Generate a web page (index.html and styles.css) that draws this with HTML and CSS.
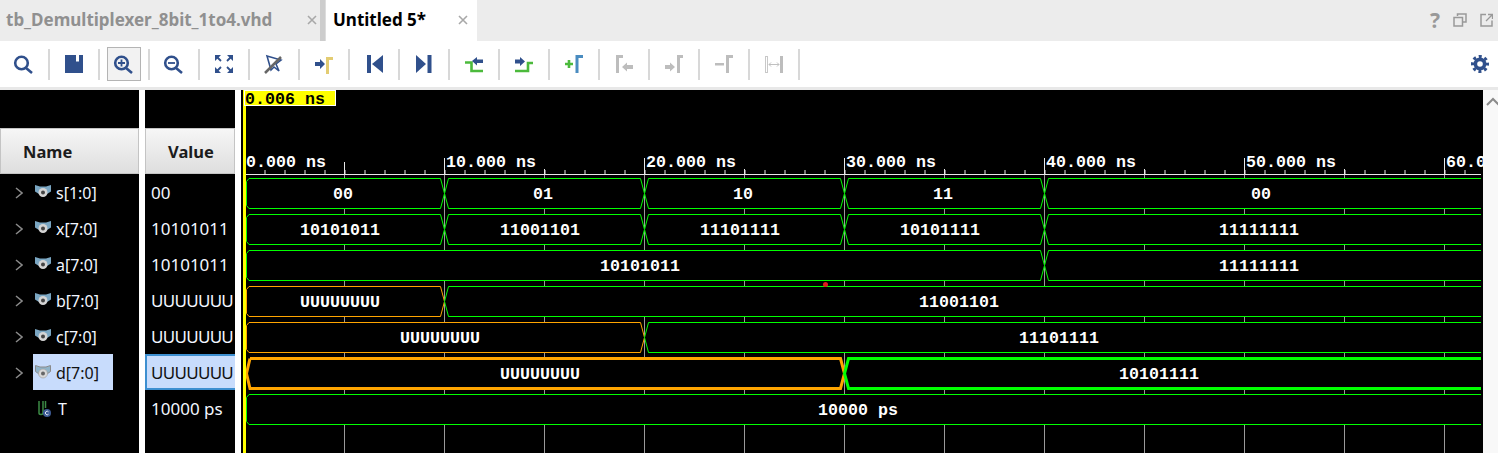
FILE: index.html
```html
<!DOCTYPE html>
<html>
<head lang="en">
    <meta charset="UTF-8">
    <title>Untitled 5</title>
    <link rel="stylesheet" href="styles.css">
</head>
<body>
<svg class="defs" width="0" height="0">
    <symbol id="bus" viewBox="0 0 16 16">
        <path d="M0 1L5 2.500H11L16 1V7.500L12 10H4L0 7.500Z" fill="#7aa6c2"/>
        <circle cx="8" cy="8.500" r="4.500" fill="#d4d4d4"/>
        <circle cx="8" cy="8.500" r="2" fill="#444"/>
    </symbol>
    <symbol id="bus-sel" viewBox="0 0 16 16">
        <path d="M.5 1.500L5 3H11L15.500 1.500V7.500L12 10H4L.5 7.500Z" fill="#8fb3c8" stroke="#8a8a8a"/>
        <circle cx="8" cy="9.500" r="4.500" fill="#d8d8d8" stroke="#999" stroke-width=".6"/>
        <circle cx="8" cy="9.500" r="2" fill="#666"/>
    </symbol>
    <symbol id="chev" viewBox="0 0 8 12">
        <path d="M1 1L7 6L1 11" fill="none" stroke="#8a8a8a" stroke-width="1.500"/>
    </symbol>
    <symbol id="close" viewBox="0 0 10 10">
        <path d="M1 1L9 9M9 1L1 9" stroke="#a8a8a8" stroke-width="1.600"/>
    </symbol>
</svg>

<div class="tabbar">
    <div class="tab tab-off">
        <span class="tab-title">tb_Demultiplexer_8bit_1to4.vhd</span>
        <svg class="tab-x" width="10" height="10"><use href="#close"/></svg>
    </div>
    <div class="tab-sep"></div>
    <div class="tab tab-on">
        <span class="tab-title">Untitled 5*</span>
        <svg class="tab-x" width="10" height="10"><use href="#close"/></svg>
    </div>
    <div class="win-btns">
        <span class="help">?</span>
        <svg width="14" height="14" viewBox="0 0 14 14" fill="none" stroke="#999" stroke-width="1.500"><path d="M4.500 3V1H13V9H9.500"/><rect x="1" y="4.500" width="8.500" height="8.500"/></svg>
        <svg width="13" height="14" viewBox="0 0 13 14" fill="none" stroke="#999" stroke-width="1.500"><path d="M6 1.500H1V13H12V7.500"/><path d="M6 8L12 2M8 1.500H12.500V6" stroke-width="1.300"/></svg>
    </div>
</div>

<div class="toolbar">
    <div class="tool"><div class="btn"><svg class="ico" viewBox="0 0 24 24"><circle cx="9.500" cy="11" r="6.300" class="ln"/><path d="M14 16L20 21" class="ln"/></svg></div></div>
    <div class="tool"><div class="btn"><svg class="ico" viewBox="0 0 24 24"><path d="M3 3H21V21H3Z" class="bl"/><rect x="14" y="3" width="3" height="6.500" fill="#fff"/></svg></div></div>
    <div class="tool"><div class="btn btn-on"><svg class="ico" viewBox="0 0 24 24"><circle cx="9.500" cy="11" r="6.300" class="ln"/><path d="M14 16L20 21" class="ln"/><path d="M9.500 7.500V14.500M6 11H13" class="ln thin"/></svg></div></div>
    <div class="tool"><div class="btn"><svg class="ico" viewBox="0 0 24 24"><circle cx="9.500" cy="11" r="6.300" class="ln"/><path d="M14 16L20 21" class="ln"/><path d="M6 11H13" class="ln thin"/></svg></div></div>
    <div class="tool"><div class="btn"><svg class="ico" viewBox="0 0 24 24"><path d="M4 4L9 9M20 4L15 9M4 20L9 15M20 20L15 15" class="ln thin"/><path d="M3 3H9L3 9ZM21 3H15L21 9ZM3 21H9L3 15ZM21 21H15L21 15Z" class="bl"/></svg></div></div>
    <div class="tool"><div class="btn"><svg class="ico" viewBox="0 0 24 24"><path d="M5 4L19 8L14 12L17 19L12 15L9 18Z" fill="none" stroke="#30508c" stroke-width="1.600"/><path d="M3 21L19 5" stroke="#666" stroke-width="2.500"/></svg></div></div>
    <div class="tool"><div class="btn"><svg class="ico" viewBox="0 0 24 24"><path d="M3 10H8V7L13 12L8 17V14H3Z" class="bl"/><path d="M15.500 22V6.500H21" class="gd"/></svg></div></div>
    <div class="tool"><div class="btn"><svg class="ico" viewBox="0 0 24 24"><rect x="5" y="3" width="4" height="18" class="bl"/><path d="M21 3V21L10 12Z" class="bl"/></svg></div></div>
    <div class="tool"><div class="btn"><svg class="ico" viewBox="0 0 24 24"><rect x="15.500" y="3" width="4" height="18" class="bl"/><path d="M4 3V21L14 12Z" class="bl"/></svg></div></div>
    <div class="tool"><div class="btn"><svg class="ico" viewBox="0 0 24 24"><path d="M3 10.500H9.500V19H21" class="gr"/><path d="M10 9L15 5V7.500H21V11H15V13.500Z" class="bl"/></svg></div></div>
    <div class="tool"><div class="btn"><svg class="ico" viewBox="0 0 24 24"><path d="M3 19H16V11H21" class="gr"/><path d="M3 7.500H8V5L13 9.500L8 14V11.500H3Z" class="bl"/></svg></div></div>
    <div class="tool"><div class="btn"><svg class="ico" viewBox="0 0 24 24"><path d="M3 12H11M7 8V16" class="gr"/><path d="M15 21V4.500H21" fill="none" stroke="#4a8cc0" stroke-width="3"/></svg></div></div>
    <div class="tool"><div class="btn"><svg class="ico" viewBox="0 0 24 24"><path d="M5.500 21V4.500H11" class="dis"/><path d="M10 15L15 10.500V13H21V17H15V19.500Z" fill="#bdbdbd"/></svg></div></div>
    <div class="tool"><div class="btn"><svg class="ico" viewBox="0 0 24 24"><path d="M16.500 21V4.500H21" class="dis"/><path d="M3 13H8V10.500L13 15L8 19.500V17H3Z" fill="#bdbdbd"/></svg></div></div>
    <div class="tool"><div class="btn"><svg class="ico" viewBox="0 0 24 24"><path d="M15.500 21V4.500H21" class="dis"/><rect x="3" y="11" width="9" height="2.500" fill="#bdbdbd"/></svg></div></div>
    <div class="tool"><div class="btn"><svg class="ico" viewBox="0 0 24 24"><rect x="3.500" y="4.500" width="2" height="16" fill="none" stroke="#c8c8c8"/><rect x="18" y="4" width="3" height="17" fill="#bdbdbd"/><path d="M7 12.500H17M9 10.500L7 12.500L9 14.500M15 10.500L17 12.500L15 14.500" fill="none" stroke="#c0c0c0"/></svg></div></div>
    <svg class="gear" width="20" height="20" viewBox="0 0 20 20"><circle cx="10" cy="10" r="6.500" fill="#30508c"/><circle cx="10" cy="10" r="7.500" fill="none" stroke="#30508c" stroke-width="3" stroke-dasharray="3 2.890" stroke-dashoffset="1.500"/><circle cx="10" cy="10" r="2.800" fill="#fff"/></svg>
</div>
<div class="toolbar-edge"></div>

<div class="main">
    <div class="col names">
        <div class="head">Name</div>
        <div class="row"><svg class="chev" width="8" height="12"><use href="#chev"/></svg><div class="sig"><svg class="bus" width="16" height="16"><use href="#bus"/></svg>s[1:0]</div></div>
        <div class="row"><svg class="chev" width="8" height="12"><use href="#chev"/></svg><div class="sig"><svg class="bus" width="16" height="16"><use href="#bus"/></svg>x[7:0]</div></div>
        <div class="row"><svg class="chev" width="8" height="12"><use href="#chev"/></svg><div class="sig"><svg class="bus" width="16" height="16"><use href="#bus"/></svg>a[7:0]</div></div>
        <div class="row"><svg class="chev" width="8" height="12"><use href="#chev"/></svg><div class="sig"><svg class="bus" width="16" height="16"><use href="#bus"/></svg>b[7:0]</div></div>
        <div class="row"><svg class="chev" width="8" height="12"><use href="#chev"/></svg><div class="sig"><svg class="bus" width="16" height="16"><use href="#bus"/></svg>c[7:0]</div></div>
        <div class="row"><svg class="chev" width="8" height="12"><use href="#chev"/></svg><div class="sig sig-on"><svg class="bus" width="16" height="16"><use href="#bus-sel"/></svg>d[7:0]</div></div>
        <div class="row row-leaf"><div class="sig"><svg class="bus" width="16" height="18" viewBox="0 0 16 18"><path d="M2 1V13C2 15 6 15 6 13V1M8.500 1V8" fill="none" stroke="#3c8a46" stroke-width="1.500"/><circle cx="10" cy="13" r="4" fill="#3d5a94"/><path d="M11.500 11.800A1.800 1.800 0 1 0 11.500 14.200" fill="none" stroke="#dfe6f2"/></svg>T</div></div>
    </div>
    <div class="col values">
        <div class="head">Value</div>
        <div class="val">00</div>
        <div class="val">10101011</div>
        <div class="val">10101011</div>
        <div class="val val-u">UUUUUUU</div>
        <div class="val val-u">UUUUUUU</div>
        <div class="val val-u val-on">UUUUUUU</div>
        <div class="val">10000 ps</div>
    </div>
    <div class="wave-pane">
        <svg class="wave" width="1242" height="363" viewBox="241 90 1242 363">
            <!-- grid -->
            <g class="grid">
                <path d="M344.500 174V453M444.500 174V453M544.500 174V453M644.500 174V453M744.500 174V453M844.500 174V453M944.500 174V453M1044.500 174V453M1144.500 174V453M1244.500 174V453M1344.500 174V453M1444.500 174V453"/>
            </g>
            <!-- ruler -->
            <g class="ruler">
                <path d="M246 174.500H1481"/>
                <path d="M244 172H1481" stroke-width="4" stroke-dasharray="1 19" transform="translate(.5 0)"/>
                <path d="M344.500 162V174M444.500 158V174M644.500 158V174M844.500 158V174M1044.500 158V174M1244.500 158V174M1444.500 158V174M544.500 169V174M744.500 169V174M944.500 169V174M1144.500 169V174M1344.500 169V174"/>
            </g>
            <text class="t" x="246" y="167">0.000 ns</text>
            <text class="t" x="446" y="167">10.000 ns</text>
            <text class="t" x="646" y="167">20.000 ns</text>
            <text class="t" x="846" y="167">30.000 ns</text>
            <text class="t" x="1046" y="167">40.000 ns</text>
            <text class="t" x="1246" y="167">50.000 ns</text>
            <text class="t" x="1446" y="167">60.000 ns</text>

            <!-- s -->
            <g class="sg" transform="translate(0 178.500)">
                <polyline points="249,0 440.500,0 444.500,15 440.500,30 249,30 246.500,27 246.500,3 249,0"/>
                <polyline points="448.500,0 640.500,0 644.500,15 640.500,30 448.500,30 444.500,15 448.500,0"/>
                <polyline points="648.500,0 840.500,0 844.500,15 840.500,30 648.500,30 644.500,15 648.500,0"/>
                <polyline points="848.500,0 1040.500,0 1044.500,15 1040.500,30 848.500,30 844.500,15 848.500,0"/>
                <polyline points="1481,0 1048.500,0 1044.500,15 1048.500,30 1481,30"/>
                <text x="343" y="20.500">00</text><text x="543" y="20.500">01</text><text x="743" y="20.500">10</text><text x="943" y="20.500">11</text><text x="1261" y="20.500">00</text>
            </g>
            <!-- x -->
            <g class="sg" transform="translate(0 214.500)">
                <polyline points="249,0 440.500,0 444.500,15 440.500,30 249,30 246.500,27 246.500,3 249,0"/>
                <polyline points="448.500,0 640.500,0 644.500,15 640.500,30 448.500,30 444.500,15 448.500,0"/>
                <polyline points="648.500,0 840.500,0 844.500,15 840.500,30 648.500,30 644.500,15 648.500,0"/>
                <polyline points="848.500,0 1040.500,0 1044.500,15 1040.500,30 848.500,30 844.500,15 848.500,0"/>
                <polyline points="1481,0 1048.500,0 1044.500,15 1048.500,30 1481,30"/>
                <text x="340" y="20.500">10101011</text><text x="540" y="20.500">11001101</text><text x="740" y="20.500">11101111</text><text x="940" y="20.500">10101111</text><text x="1259" y="20.500">11111111</text>
            </g>
            <!-- a -->
            <g class="sg" transform="translate(0 250.500)">
                <polyline points="249,0 1040.500,0 1044.500,15 1040.500,30 249,30 246.500,27 246.500,3 249,0"/>
                <polyline points="1481,0 1048.500,0 1044.500,15 1048.500,30 1481,30"/>
                <text x="640" y="20.500">10101011</text><text x="1259" y="20.500">11111111</text>
            </g>
            <!-- b -->
            <g class="sg" transform="translate(0 286.500)">
                <polyline class="und" points="249,0 440.500,0 444.500,15 440.500,30 249,30 246.500,27 246.500,3 249,0"/>
                <polyline points="1481,0 448.500,0 444.500,15 448.500,30 1481,30"/>
                <text x="340" y="20.500">UUUUUUUU</text><text x="959" y="20.500">11001101</text>
            </g>
            <!-- c -->
            <g class="sg" transform="translate(0 322.500)">
                <polyline class="und" points="249,0 640.500,0 644.500,15 640.500,30 249,30 246.500,27 246.500,3 249,0"/>
                <polyline points="1481,0 648.500,0 644.500,15 648.500,30 1481,30"/>
                <text x="440" y="20.500">UUUUUUUU</text><text x="1059" y="20.500">11101111</text>
            </g>
            <!-- d -->
            <g class="sg sg-sel" transform="translate(0 358.500)">
                <polyline class="und" points="250,0 840.500,0 844.500,15 840.500,30 250,30 246.500,15 250,0"/>
                <polyline points="1481,0 848.500,0 844.500,15 848.500,30 1481,30"/>
                <text x="540" y="20.500">UUUUUUUU</text><text x="1159" y="20.500">10101111</text>
            </g>
            <!-- T -->
            <g class="sg" transform="translate(0 394.500)">
                <polyline points="1481,0 249,0 246.500,3 246.500,27 249,30 1481,30"/>
                <text x="858" y="20.500">10000 ps</text>
            </g>
            <circle cx="825.500" cy="284.500" r="2.500" fill="#e01a1a"/>

            <!-- cursor -->
            <rect x="243" y="90" width="3" height="363" fill="#ffff00"/>
            <rect x="244.500" y="90.500" width="91" height="15" fill="#ffff00" stroke="#fff"/>
            <text class="t t-cur" x="245" y="104">0.006 ns</text>
        </svg>
    </div>
    <div class="scroll">
        <svg width="15" height="10" viewBox="0 0 15 10"><path d="M4 8L10 2L16 8" fill="none" stroke="#8a8a8a" stroke-width="2"/></svg>
    </div>
</div>
</body>
</html>
```

FILE: styles.css
```css
*{
    margin:0;
    padding:0;
    box-sizing:border-box;
}
html,body{
    height:453px;
    overflow:hidden;
}
body{
    background:#fff;
    font-family:"Noto Sans",sans-serif;
    display:flex;
    flex-direction:column;
}
.defs{
    display:block;
    height:0;
}

/* tabs */
.tabbar{
    height:41px;
    background:#ececec;
    display:flex;
    flex:none;
}
.tab{
    display:flex;
    align-items:center;
    font-size:17px;
    font-weight:bold;
    padding-bottom:2px;
}
.tab-off{
    width:320px;
    padding-left:6px;
    color:#909090;
}
.tab-sep{
    width:6px;
    background:#cdcdcd;
    border-right:1px solid #ddd;
}
.tab-on{
    width:151px;
    padding-left:7px;
    background:#fff;
    color:#000;
}
.tab-x{
    margin-left:auto;
    margin-right:3px;
}
.tab-on .tab-x{
    margin-right:9px;
}
.win-btns{
    margin-left:auto;
    display:flex;
    align-items:center;
    gap:13px;
    padding-right:5px;
    padding-bottom:2px;
}
.help{
    font-size:21px;
    font-weight:bold;
    color:#999;
}

/* toolbar */
.toolbar{
    height:46px;
    flex:none;
    display:flex;
    align-items:center;
}
.tool{
    width:50px;
    height:46px;
    display:flex;
    align-items:center;
    justify-content:center;
    padding-right:2px;
    background:linear-gradient(#d8d8d8,#d8d8d8) right center/2px 31px no-repeat;
}
.btn{
    width:34px;
    height:34px;
    border:1px solid transparent;
    display:flex;
    align-items:center;
    justify-content:center;
}
.btn-on{
    border-color:#b4b4b4;
    background:#f2f2f2;
}
.ico{
    width:24px;
    height:24px;
}
.ln{
    fill:none;
    stroke:#30508c;
    stroke-width:2.6;
}
.thin{
    stroke-width:1.8;
}
.bl{
    fill:#30508c;
}
.gd{
    fill:none;
    stroke:#e3cc72;
    stroke-width:3;
}
.gr{
    fill:none;
    stroke:#4cba3c;
    stroke-width:2.6;
}
.dis{
    fill:none;
    stroke:#bdbdbd;
    stroke-width:3;
}
.gear{
    margin-left:auto;
    margin-right:8px;
}
.toolbar-edge{
    height:3px;
    flex:none;
    background:#e8e8e8;
}

/* main panes */
.main{
    flex:1;
    display:flex;
    min-height:0;
}
.col{
    background:#000;
    padding-top:38px;
    color:#f2f6ff;
    flex:none;
}
.names{
    width:139px;
    font-size:16px;
}
.values{
    width:90px;
    margin-left:6px;
    overflow:hidden;
    font-size:17px;
}
.head{
    height:46px;
    line-height:46px;
    padding-left:22px;
    font-size:16.5px;
    font-weight:bold;
    color:#1c1c1c;
    background:linear-gradient(#f6f6f6,#dedede);
    border:1px solid #c4c4c4;
}
.row{
    height:36px;
    display:flex;
    align-items:center;
    padding-left:15px;
}
.row-leaf{
    padding-left:33px;
}
.chev{
    flex:none;
    margin-top:2px;
}
.sig{
    height:36px;
    display:flex;
    align-items:center;
    margin-left:10px;
    padding-left:2px;
    padding-top:2px;
    width:80px;
}
.row-leaf .sig{
    margin-left:0;
}
.row-leaf .bus{
    margin-left:2px;
    margin-right:5px;
    margin-top:-1px;
}
.sig-on{
    background:#c8dcfc;
    color:#111;
}
.bus{
    margin-right:5px;
    margin-top:-3px;
    flex:none;
}
.val{
    height:36px;
    line-height:38px;
    padding-left:6px;
    white-space:nowrap;
    overflow:hidden;
}
.val-u{
    letter-spacing:-.7px;
}
.val-on{
    background:#c8dcfc;
    color:#111;
    border:2px solid #3d8fd0;
    border-right:none;
    line-height:34px;
    padding-left:4px;
}
.wave-pane{
    width:1242px;
    margin-left:6px;
    background:#000;
    flex:none;
}
.wave{
    display:block;
}
.scroll{
    flex:1;
    background:#f8f8f8;
    padding-top:7px;
}
.scroll svg{
    display:block;
}

/* waveform */
.grid path{
    fill:none;
    stroke:#9a9a9a;
}
.ruler path{
    fill:none;
    stroke:#e8e8e8;
}
.t,.sg text{
    font-family:"Liberation Mono",monospace;
    font-size:16.67px;
    font-weight:bold;
    fill:#fff;
}
.sg text{
    text-anchor:middle;
}
.t-cur{
    fill:#000;
}
.sg polyline{
    fill:#000;
    stroke:#00ff00;
    stroke-width:1;
}
.sg polyline.und{
    stroke:#ffa500;
}
.sg-sel polyline{
    stroke-width:3;
}
```
